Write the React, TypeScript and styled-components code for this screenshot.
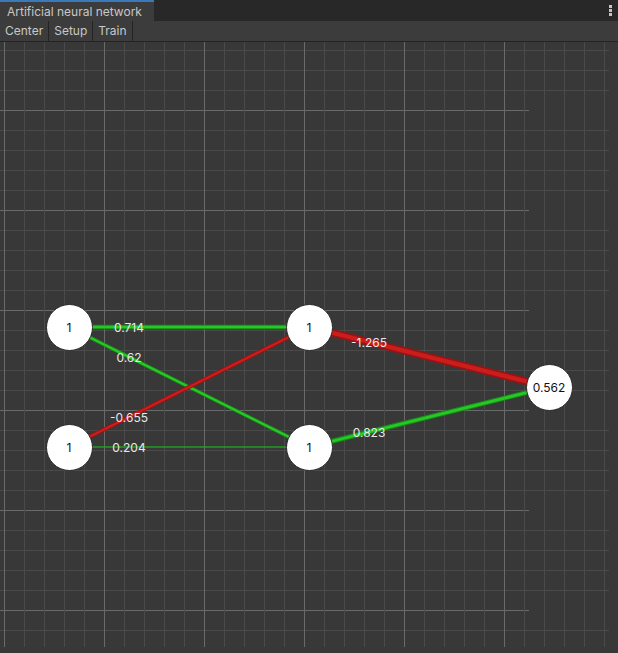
import React from "react";
import styled, { createGlobalStyle } from "styled-components";

const GlobalStyle = createGlobalStyle`
  html, body { margin: 0; padding: 0; background: #383838; }
  body { font-family: Inter, "Noto Sans", sans-serif; overflow: hidden; }
  * { box-sizing: border-box; }
`;

const Window = styled.div`
  width: 618px;
  height: 653px;
  display: flex;
  flex-direction: column;
  background: #383838;
`;

const TabBar = styled.div`
  height: 21px;
  display: flex;
  align-items: stretch;
  background: #282828;
  position: relative;
`;

const Tab = styled.div`
  width: 154px;
  background: #3c3c3c;
  border-top: 2px solid #3a79bb;
  color: #c8c8c8;
  font-size: 12px;
  line-height: 19px;
  padding-left: 7px;
  white-space: nowrap;
`;

const Spacer = styled.div`
  flex: 1;
`;

const Kebab = styled.div`
  width: 14px;
  display: flex;
  flex-direction: column;
  align-items: center;
  justify-content: center;
  gap: 1px;
  margin-right: 1px;
  span {
    width: 3px;
    height: 3px;
    background: #c4c4c4;
  }
`;

const Toolbar = styled.div`
  height: 21px;
  display: flex;
  background: #3c3c3c;
  border-bottom: 1px solid #232323;
`;

const ToolButton = styled.div`
  padding: 0 5px 0 5px;
  color: #c8c8c8;
  font-size: 12px;
  line-height: 20px;
  border-right: 1px solid #242424;
`;

const Canvas = styled.div`
  position: relative;
  flex: 1;
  background: #383838;
  overflow: hidden;
`;

const Graph = styled.svg`
  position: absolute;
  left: 0;
  top: 0;
`;

const Node = styled.div<{ $x: number; $y: number }>`
  position: absolute;
  left: ${(p) => p.$x - 23.5}px;
  top: ${(p) => p.$y - 23.5}px;
  width: 47px;
  height: 47px;
  border-radius: 50%;
  background: #ffffff;
  border: 1px solid #2a2a2a;
  display: flex;
  align-items: center;
  justify-content: center;
  color: #111;
  font-size: 12px;
`;

const WeightLabel = styled.div<{ $x: number; $y: number }>`
  position: absolute;
  left: ${(p) => p.$x}px;
  top: ${(p) => p.$y}px;
  transform: translate(-50%, -50%);
  color: #e8e8e8;
  font-size: 12px;
  white-space: nowrap;
`;

const TOP = 42;

type N = { id: string; x: number; y: number; label: string };
const nodes: N[] = [
  { id: "i0", x: 69, y: 327, label: "1" },
  { id: "i1", x: 69, y: 447, label: "1" },
  { id: "h0", x: 309, y: 327, label: "1" },
  { id: "h1", x: 309, y: 447, label: "1" },
  { id: "o0", x: 549, y: 387, label: "0.562" },
];
const byId = Object.fromEntries(nodes.map((n) => [n.id, n]));

const edges: { a: string; b: string; w: number; label: string }[] = [
  { a: "i0", b: "h0", w: 0.714, label: "0.714" },
  { a: "i0", b: "h1", w: 0.62, label: "0.62" },
  { a: "i1", b: "h0", w: -0.655, label: "-0.655" },
  { a: "i1", b: "h1", w: 0.204, label: "0.204" },
  { a: "h0", b: "o0", w: -1.265, label: "-1.265" },
  { a: "h1", b: "o0", w: 0.823, label: "0.823" },
];

function GridLines() {
  const lines: React.ReactNode[] = [];
  // horizontal
  for (let y = 50; y <= 630; y += 20) {
    const major = (y - 10) % 100 === 0;
    lines.push(
      <line
        key={"h" + y}
        x1={0}
        x2={major ? 529 : 609}
        y1={y - TOP + 0.5}
        y2={y - TOP + 0.5}
        stroke={major ? "#6a6a6a" : "#4a4a4a"}
        strokeWidth={1}
      />
    );
  }
  for (let x = 4; x <= 604; x += 20) {
    const major = (x - 4) % 100 === 0 && x <= 504;
    lines.push(
      <line
        key={"v" + x}
        x1={x + 0.5}
        x2={x + 0.5}
        y1={0}
        y2={647 - TOP}
        stroke={major ? "#6a6a6a" : "#4a4a4a"}
        strokeWidth={1}
      />
    );
  }
  return <g>{lines}</g>;
}

export default function App() {
  return (
    <>
      <GlobalStyle />
      <Window>
        <TabBar>
          <Tab>Artificial neural network</Tab>
          <Spacer />
          <Kebab>
            <span />
            <span />
            <span />
          </Kebab>
        </TabBar>
        <Toolbar>
          <ToolButton>Center</ToolButton>
          <ToolButton>Setup</ToolButton>
          <ToolButton>Train</ToolButton>
        </Toolbar>
        <Canvas>
          <Graph width={618} height={611}>
            <GridLines />
            {edges.map((e, i) => {
              const a = byId[e.a];
              const b = byId[e.b];
              const pos = e.w >= 0;
              const w = Math.abs(e.w) * 6;
              return (
                <g key={i}>
                  <line
                    x1={a.x}
                    y1={a.y - TOP}
                    x2={b.x}
                    y2={b.y - TOP}
                    stroke={pos ? "#178a17" : "#961414"}
                    strokeWidth={w}
                  />
                  <line
                    x1={a.x}
                    y1={a.y - TOP}
                    x2={b.x}
                    y2={b.y - TOP}
                    stroke={pos ? "#26c826" : "#cc1c1c"}
                    strokeWidth={w * 0.55}
                  />
                </g>
              );
            })}
          </Graph>
          {edges.map((e, i) => {
            const a = byId[e.a];
            const b = byId[e.b];
            const x = a.x + (b.x - a.x) * 0.25;
            const y = a.y + (b.y - a.y) * 0.25 - TOP;
            return (
              <WeightLabel key={"l" + i} $x={x} $y={y}>
                {e.label}
              </WeightLabel>
            );
          })}
          {nodes.map((n) => (
            <Node key={n.id} $x={n.x} $y={n.y - TOP}>
              {n.label}
            </Node>
          ))}
        </Canvas>
      </Window>
    </>
  );
}
